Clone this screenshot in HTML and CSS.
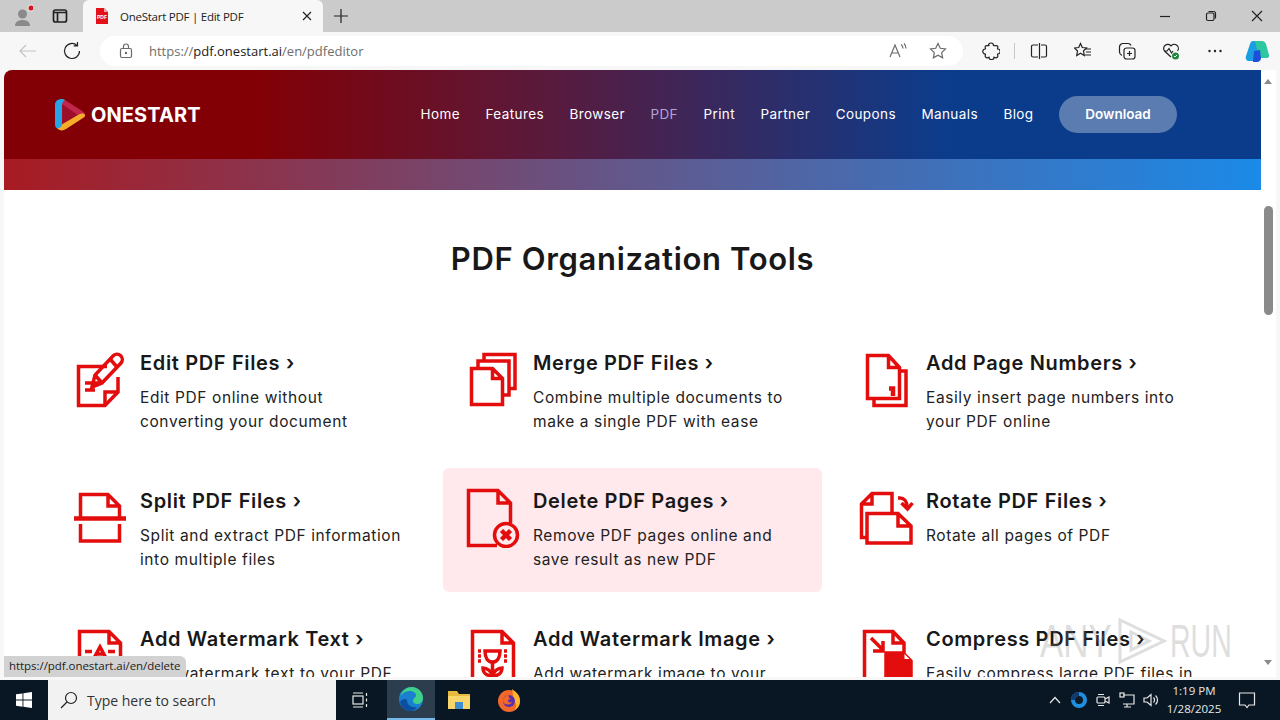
FILE: index.html
```html
<!DOCTYPE html>
<html lang="en">
<head>
    <meta charset="UTF-8">
    <title>OneStart PDF | Edit PDF</title>
    <link rel="stylesheet" href="styles.css">
</head>
<body>
    <div class="tabstrip">
        <div class="strip-btn profile">
            <svg width="24" height="24" viewBox="0 0 24 24"><circle cx="13.500" cy="10" r="4.500" fill="#8a8a8a"/><path d="M6 22c0-4 3-6 7.500-6s7.500 2 7.500 6z" fill="#8a8a8a"/><circle cx="22" cy="4" r="3.500" fill="#e8e8e8"/><circle cx="22" cy="4" r="2.500" fill="#d8111b"/></svg>
        </div>
        <div class="strip-btn">
            <svg width="16" height="16" viewBox="0 0 16 16" class="line-icon dark bold"><rect x="1.500" y="2" width="13" height="12" rx="2"/><path d="M1.500 4.500h13M5.500 4.500V14"/></svg>
        </div>
        <div class="tab">
            <svg width="14" height="16" viewBox="0 0 14 16"><path d="M1 0h8l4 4v12H1z" fill="#e3121a"/><path d="M9 0l4 4H9z" fill="#f7a0a0"/><text x="7" y="10.500" class="favicon-text">PDF</text></svg>
            <span class="tab-title">OneStart PDF | Edit PDF</span>
            <svg width="12" height="12" viewBox="0 0 12 12" class="line-icon dark"><path d="M2 2l8 8M10 2l-8 8"/></svg>
        </div>
        <div class="new-tab">
            <svg width="16" height="16" viewBox="0 0 16 16" class="line-icon dark"><path d="M8 1v14M1 8h14"/></svg>
        </div>
        <div class="window-controls">
            <svg width="12" height="12" viewBox="0 0 12 12" class="line-icon dark"><path d="M1 6.500h10"/></svg>
            <svg width="12" height="12" viewBox="0 0 12 12" class="line-icon dark"><rect x="1.500" y="3" width="7.500" height="7.500" rx="1.500"/><path d="M3.500 1.500h5a2 2 0 0 1 2 2v5"/></svg>
            <svg width="12" height="12" viewBox="0 0 12 12" class="line-icon dark"><path d="M1 1l10 10M11 1L1 11"/></svg>
        </div>
    </div>

    <div class="toolbar">
        <div class="tool-btn">
            <svg width="18" height="18" viewBox="0 0 18 18" class="line-icon faint"><path d="M17 9H1M7 3L1 9l6 6"/></svg>
        </div>
        <div class="tool-btn">
            <svg width="20" height="20" viewBox="0 0 20 20" class="line-icon dark"><path d="M17.500 10A7.500 7.500 0 1 1 15 4.400M15.500 1v3.800H11.700"/></svg>
        </div>
        <div class="address">
            <svg width="14" height="16" viewBox="0 0 14 16" class="line-icon gray"><rect x="1.500" y="5.500" width="11" height="9" rx="1.500"/><path d="M4.500 5.500V3.500a2.500 2.500 0 0 1 5 0v2"/><circle cx="7" cy="10" r=".6"/></svg>
            <span class="url">https://<b>pdf.onestart.ai</b>/en/pdfeditor</span>
            <svg width="18" height="16" viewBox="0 0 18 16" class="line-icon gray read-aloud"><path d="M1 14L6 2l5 12M3 10h6M12 1.500a5 5 0 0 1 2 4M15 0.500a7 7 0 0 1 2 5"/></svg>
            <svg width="18" height="18" viewBox="0 0 18 18" class="line-icon gray star"><path d="M9 1.500l2.300 4.800 5.200.7-3.800 3.600.9 5.200L9 13.300l-4.600 2.500.9-5.200L1.500 7l5.200-.7z"/></svg>
        </div>
        <div class="tool-btn">
            <svg width="18" height="18" viewBox="0 0 18 18" class="line-icon dark"><path d="M6.500 3.500a2.500 2.500 0 0 1 5 0c0 .7 3-.5 4 .5s-.5 3 .2 3a2.500 2.500 0 0 1 0 5c-.7 0 .8 2-.2 3s-3 .5-3.500.2a2.500 2.500 0 0 1-5 0c-.5.300-2.500.8-3.500-.2s.5-3-.2-3a2.500 2.500 0 0 1 0-5c.7 0-.8-2 .2-3s3.500 .2 3.500-.5z"/></svg>
        </div>
        <div class="divider"></div>
        <div class="tool-btn">
            <svg width="18" height="18" viewBox="0 0 18 18" class="line-icon dark"><path d="M8 3H3a1.500 1.500 0 0 0-1.500 1.500v9A1.500 1.500 0 0 0 3 15h5M11 3h4a1.500 1.500 0 0 1 1.500 1.500v9A1.500 1.500 0 0 1 15 15h-4M9.500 1v16"/></svg>
        </div>
        <div class="tool-btn">
            <svg width="18" height="18" viewBox="0 0 18 18" class="line-icon dark"><path d="M6.500 1.500l1.800 4 4.200.5-3 3 .8 4.500-3.800-2.300-3.800 2.300.8-4.500-3-3 4.200-.5zM12 7h5M12 10h5M11 13h6"/></svg>
        </div>
        <div class="tool-btn">
            <svg width="18" height="18" viewBox="0 0 18 18" class="line-icon dark"><rect x="6" y="6" width="11" height="11" rx="2.500"/><path d="M11.500 9v5M9 11.500h5M4 13.500c-2-1-2.500-2-2.500-3.500V5A3.500 3.500 0 0 1 5 1.500h5c1.500 0 2.500.7 3 2"/></svg>
        </div>
        <div class="tool-btn">
            <svg width="18" height="18" viewBox="0 0 18 18"><path d="M9 15L2.500 9A4 4 0 0 1 9 4a4 4 0 0 1 6.500 5M2 9h3l2-2.500L9.500 11 11 9" fill="none" stroke="#222" stroke-width="1.200"/><circle cx="13.500" cy="14" r="3.500" fill="#1f8a3a"/><path d="M12 14l1 1 2-2" fill="none" stroke="#fff"/></svg>
        </div>
        <div class="tool-btn">
            <svg width="16" height="4" viewBox="0 0 16 4" fill="#222"><circle cx="2.500" cy="2" r="1.200"/><circle cx="8" cy="2" r="1.200"/><circle cx="13.500" cy="2" r="1.200"/></svg>
        </div>
        <div class="tool-btn copilot">
            <svg width="24" height="24" viewBox="0 0 24 24"><path d="M8 2h8l-4 16c-.5 2-2 4-4 4H4C2 22 0 20 1 17L5 5c.5-2 1.500-3 3-3z" fill="#1b9de2"/><path d="M10 2h7c2 0 3 1 4 3l3 11c.5 2-1 3-3 3h-7z" fill="#2fc7a0"/><path d="M9 12l6-1 1 9c-1 2-2 3-4 3H8z" fill="#1d4fd8"/></svg>
        </div>
    </div>

    <div class="viewport">
        <div class="page">
            <header class="site-header">
                <a class="logo">
                    <svg width="32" height="34" viewBox="0 0 32 34">
                        <path d="M8 1c1 0 2 .3 3 .9l18 11.500c2.500 1.600 2.500 4.400 0 6L24 22 8 12z" fill="#c2264a"/>
                        <path d="M8 6l16 11-16 10z" fill="#9c0f2a"/>
                        <path d="M31 17c.3 1-.3 2-2 3L12 31c-3 2-7 2-9-1l-.5-4c1.500 1.500 3.500 1.500 6 0L24 17c3-2 6-2 7 0z" fill="#f6ab2a"/>
                        <path d="M8 1C4 1 1 3 1 7v19c0 2 .5 3 1.500 4C5 31 8 29 8 26V8c0-3 1-5 3-6.100C10 1.300 9 1 8 1z" fill="#27a4e6"/>
                    </svg>
                    <span class="logo-text">ONESTART</span>
                </a>
                <nav class="site-nav">
                    <a>Home</a>
                    <a>Features</a>
                    <a>Browser</a>
                    <a class="active">PDF</a>
                    <a>Print</a>
                    <a>Partner</a>
                    <a>Coupons</a>
                    <a>Manuals</a>
                    <a>Blog</a>
                    <a class="download-btn">Download</a>
                </nav>
            </header>
            <div class="header-band"></div>

            <section class="tools">
                <h1>PDF Organization Tools</h1>
                <div class="tools-grid">
                    <a class="tool-card">
                        <svg class="tool-icon" viewBox="0 0 60 60">
                            <path d="M37 16.500H8.500v39H35L48 42V27"/>
                            <path d="M35 55V42h13"/>
                            <path d="M22 37l3-12L43 6a5 5 0 0 1 8 7L32 33z"/>
                            <path d="M25 25l7 8M40 9l7 8M15 33h17M15 40h10"/>
                        </svg>
                        <div class="tool-text">
                            <h3>Edit PDF Files ›</h3>
                            <p>Edit PDF online without converting your document</p>
                        </div>
                    </a>
                    <a class="tool-card">
                        <svg class="tool-icon" viewBox="0 0 60 60">
                            <path d="M8.500 18.500h21l10 10v26h-31zM29.500 18.500v10h10"/>
                            <path d="M15 18v-7h31v34h-6"/>
                            <path d="M21 11V4.500h31v34h-6"/>
                        </svg>
                        <div class="tool-text">
                            <h3>Merge PDF Files ›</h3>
                            <p>Combine multiple documents to make a single PDF with ease</p>
                        </div>
                    </a>
                    <a class="tool-card">
                        <svg class="tool-icon" viewBox="0 0 60 60">
                            <path d="M11.500 5.500h21l11 12v31h-32zM32.500 5.500v12h11"/>
                            <path d="M18 49v6.500h32V21h-6"/>
                            <path d="M33 38.500h4V46" class="thick"/>
                        </svg>
                        <div class="tool-text">
                            <h3>Add Page Numbers ›</h3>
                            <p>Easily insert page numbers into your PDF online</p>
                        </div>
                    </a>
                    <a class="tool-card">
                        <svg class="tool-icon" viewBox="0 0 60 60">
                            <path d="M10.500 29V6.500H38L49.500 18v11M38 6.500V18h11.500"/>
                            <path d="M4 30.500h52" class="thick"/>
                            <path d="M10.500 36v17h39V36"/>
                        </svg>
                        <div class="tool-text">
                            <h3>Split PDF Files ›</h3>
                            <p>Split and extract PDF information into multiple files</p>
                        </div>
                    </a>
                    <a class="tool-card highlighted">
                        <svg class="tool-icon" viewBox="0 0 60 60">
                            <path d="M34 57.500H5.500v-55H35L47.500 15v20M35 2.500V15h12.500"/>
                            <circle cx="43" cy="47" r="11.500" class="pink-fill"/>
                            <path d="M38.500 42.500l9 9M47.500 42.500l-9 9" class="thick"/>
                        </svg>
                        <div class="tool-text">
                            <h3>Delete PDF Pages ›</h3>
                            <p>Remove PDF pages online and save result as new PDF</p>
                        </div>
                    </a>
                    <a class="tool-card">
                        <svg class="tool-icon" viewBox="0 0 60 60">
                            <path d="M10 49.500H5.500V16L16 5.500h20V24M16 5.500V16H5.500"/>
                            <path d="M11 25.500h31l13 12.500v17H11zM42 25.500V38h13"/>
                            <path d="M42 10h2c4 0 7 3 7 9M45.500 15l6 6 5-6"/>
                        </svg>
                        <div class="tool-text">
                            <h3>Rotate PDF Files ›</h3>
                            <p>Rotate all pages of PDF</p>
                        </div>
                    </a>
                    <a class="tool-card">
                        <svg class="tool-icon" viewBox="0 0 60 60">
                            <path d="M9.500 60V5.500H39L50.500 17v43M39 5.500V17h11.500"/>
                            <path d="M15 25.500h7M38 25.500h7M24 32l6-11 6 11M26 28h8M15 33h5M40 33h5"/>
                        </svg>
                        <div class="tool-text">
                            <h3>Add Watermark Text ›</h3>
                            <p>Add watermark text to your PDF</p>
                        </div>
                    </a>
                    <a class="tool-card">
                        <svg class="tool-icon" viewBox="0 0 60 60">
                            <path d="M9.500 60V5.500H39L50.500 17v43M39 5.500V17h11.500"/>
                            <path d="M22 25h15c0 7-3 11-7.500 11S22 32 22 25zM29.500 36v14M20 42c4 0 8 3 9.500 8 1.500-5 5.500-8 9.500-8 0 5-4 8-9.500 8S20 47 20 42zM15 25h3M15 30h3M15 35h3M41 25h3M41 30h3M41 35h3"/>
                        </svg>
                        <div class="tool-text">
                            <h3>Add Watermark Image ›</h3>
                            <p>Add watermark image to your PDF</p>
                        </div>
                    </a>
                    <a class="tool-card">
                        <svg class="tool-icon" viewBox="0 0 60 60">
                            <path d="M8.500 60V5.500H37L48 17v10M37 5.500V17h11"/>
                            <path d="M15 12l12 12M17 25h10V15"/>
                            <path d="M30 27h17l8 8v25H30z" class="solid"/>
                            <path d="M48.500 28l5 5h-5z" class="white-fill"/>
                        </svg>
                        <div class="tool-text">
                            <h3>Compress PDF Files ›</h3>
                            <p>Easily compress large PDF files in seconds</p>
                        </div>
                    </a>
                </div>
            </section>
        </div>

        <div class="scrollbar">
            <span class="arrow up"></span>
            <span class="thumb"></span>
            <span class="arrow down"></span>
        </div>

        <div class="status-tip">https://pdf.onestart.ai/en/delete</div>
        <div class="watermark">
            <span class="wm-any">ANY</span>
            <svg width="52" height="46" viewBox="0 0 52 46"><path d="M4 2l44 21L4 44z M15 14l18 9-18 9z" fill="none" stroke="#8a8a8a" stroke-width="3"/></svg>
            <span class="wm-run">RUN</span>
        </div>
    </div>

    <div class="taskbar">
        <div class="start">
            <svg width="16" height="16" viewBox="0 0 16 16" fill="#fff"><path d="M0 2.300l6.500-.9v6.200H0zM7.400 1.300L16 0v7.600H7.400zM0 8.500h6.500v6.200L0 13.800zM7.400 8.500H16V16l-8.600-1.200z"/></svg>
        </div>
        <div class="search">
            <svg width="18" height="18" viewBox="0 0 18 18" class="line-icon dark"><circle cx="11" cy="7" r="5.500"/><path d="M7 11l-6 6"/></svg>
            <span>Type here to search</span>
        </div>
        <div class="task-btn">
            <svg width="16" height="16" viewBox="0 0 16 16" class="line-icon white"><path d="M1 1h10M1 15h10"/><rect x="1" y="4" width="10" height="8"/><path d="M14.500 1v3M14.500 6.500v3M14.500 12v3"/></svg>
        </div>
        <div class="task-btn active">
            <svg width="24" height="24" viewBox="0 0 24 24"><circle cx="12" cy="12" r="12" fill="#1b7fd0"/><path d="M1 10C3 3 8 0 13 0c6 0 11 5 11 11 0 4-3 6-6 6-2 0-4-1-4-3 0-3 3-3 3-6 0-2-3-4-6-4C7 4 3 6 1 10z" fill="#3fd08a"/><path d="M8 13c0 5 4 8 10 7-2 3-5 4-7 4C6 24 2 20 1 15c2-3 5-4 7-2z" fill="#0c4fa0"/></svg>
        </div>
        <div class="task-btn">
            <svg width="22" height="20" viewBox="0 0 22 20"><path d="M0 1h9l2 3h11v15H0z" fill="#e8b93f"/><path d="M0 6h22v13H0z" fill="#f8d66b"/><rect x="7" y="12" width="8" height="7" fill="#3d8fd0"/></svg>
        </div>
        <div class="task-btn firefox">
            <svg width="24" height="24" viewBox="0 0 24 24"><circle cx="12" cy="13" r="11" fill="#f2682a"/><path d="M15 1c4 3 8 6 8 12 0 4-2 7-5 9 2-4 1-8-2-10 0-4 0-7-1-11z" fill="#ffb52e"/><circle cx="12" cy="13" r="6" fill="#5b2fb0"/><path d="M6 13c0-3 3-6 6-6-1 2 0 3 2 4-2 0-3 1-3 2s2 2 4 1c-1 3-8 4-9-1z" fill="#f2682a"/></svg>
        </div>
        <div class="tray">
            <svg width="12" height="8" viewBox="0 0 12 8" class="line-icon white chevron"><path d="M1 7l5-5.500L11 7"/></svg>
            <svg width="16" height="16" viewBox="0 0 16 16"><circle cx="8" cy="8" r="8" fill="#1f8fe0"/><circle cx="8" cy="8" r="4" fill="#0a1a28"/><path d="M0 8a8 8 0 0 1 8-8v4a4 4 0 0 0-4 4z" fill="#123a70"/></svg>
            <svg width="16" height="16" viewBox="0 0 16 16" class="line-icon white"><rect x="2" y="5" width="8" height="6" rx="1"/><path d="M10 7l4-2v6l-4-2M3 2.500h6M3 13.500h6"/></svg>
            <svg width="16" height="16" viewBox="0 0 16 16" class="line-icon white"><path d="M4 3h11v9H4M8 12v3M5 15h7"/><rect x="1" y="1" width="4" height="4"/></svg>
            <svg width="16" height="16" viewBox="0 0 16 16" class="line-icon white"><path d="M1 6h3l4-3.500v11L4 10H1zM10.500 5.500a3.500 3.500 0 0 1 0 5M12.500 3.500a6 6 0 0 1 0 9"/></svg>
            <div class="clock">
                <span>1:19 PM</span>
                <span>1/28/2025</span>
            </div>
            <svg class="notify line-icon white" width="18" height="18" viewBox="0 0 18 18"><path d="M1.500 2h15v12H11l-2 2.500L7 14H1.500z"/></svg>
        </div>
    </div>
</body>
</html>
```

FILE: styles.css
```css
* {
    margin: 0;
    padding: 0;
    box-sizing: border-box;
}

body {
    width: 1280px;
    height: 720px;
    overflow: hidden;
    display: flex;
    flex-direction: column;
    font-family: "Open Sans", "Liberation Sans", sans-serif;
    background: #f7f7f7;
}

.line-icon {
    fill: none;
    stroke-width: 1.2;
}

.line-icon.bold { stroke-width: 1.7; }
.line-icon.dark { stroke: #222222; }
.line-icon.gray { stroke: #6b6b6b; }
.line-icon.faint { stroke: #c4c4c4; }
.line-icon.white { stroke: #e8e8e8; }

/* browser tabs */
.tabstrip {
    height: 32px;
    display: flex;
    align-items: center;
    background: #cbcbcb;
}

.strip-btn {
    width: 38px;
    height: 32px;
    display: flex;
    align-items: center;
    justify-content: center;
}

.strip-btn.profile {
    width: 41px;
}

.tab {
    width: 240px;
    height: 32px;
    margin-left: 4px;
    padding: 0 10px 0 12px;
    display: flex;
    align-items: center;
    gap: 11px;
    background: #f7f7f7;
    border-radius: 6px 6px 0 0;
}

.favicon-text {
    font-family: "Liberation Sans", sans-serif;
    font-size: 5px;
    font-weight: 700;
    text-anchor: middle;
    fill: #ffffff;
}

.tab-title {
    flex: 1;
    font-size: 11.5px;
    letter-spacing: -0.25px;
    color: #222222;
}

.new-tab {
    width: 36px;
    display: flex;
    justify-content: center;
}

.window-controls {
    margin-left: auto;
    display: flex;
    gap: 34px;
    padding-right: 17px;
}

/* address bar row */
.toolbar {
    height: 36px;
    padding: 2px 0 0 6px;
    display: flex;
    align-items: center;
    background: #f7f7f7;
}

.tool-btn {
    width: 44px;
    height: 30px;
    display: flex;
    align-items: center;
    justify-content: center;
}

.tool-btn.copilot {
    width: 40px;
}

.address {
    width: 863px;
    height: 30px;
    margin: 0 6px;
    padding: 0 16px 0 19px;
    display: flex;
    align-items: center;
    background: #ffffff;
    border-radius: 15px;
}

.url {
    flex: 1;
    margin-left: 16px;
    font-size: 13px;
    color: #6e6e6e;
}

.url b {
    font-weight: 400;
    color: #1a1a1a;
}

.read-aloud {
    margin-right: 22px;
}

.divider {
    width: 1px;
    height: 16px;
    margin: 0 2px 0 1px;
    background: #c8c8c8;
}

/* page area */
.viewport {
    position: relative;
    height: 612px;
    padding: 2px 4px 3px;
    display: flex;
}

.page {
    width: 1257px;
    overflow: hidden;
    background: #ffffff;
    border-radius: 8px 0 0 0;
}

.site-header {
    height: 89px;
    padding: 0 84px 0 50px;
    display: flex;
    align-items: center;
    justify-content: space-between;
    background: linear-gradient(90deg, #820005 20%, #5a1a3c 43%, #0b3c8c 75%);
}

.logo {
    display: flex;
    align-items: center;
    gap: 5px;
}

.logo-text {
    font-family: Inter, sans-serif;
    font-size: 20px;
    font-weight: 700;
    letter-spacing: 0.1px;
    color: #ffffff;
}

.site-nav {
    display: flex;
    align-items: center;
    gap: 25.5px;
}

.site-nav a {
    margin-bottom: 2px;
    font-family: Inter, sans-serif;
    font-size: 13.5px;
    letter-spacing: 0.4px;
    color: #ffffff;
}

.site-nav a.active {
    color: #b3a4d8;
}

.site-nav a.download-btn {
    width: 118px;
    height: 37px;
    margin-bottom: 0;
    line-height: 37px;
    text-align: center;
    font-weight: 600;
    letter-spacing: 0;
    background: #5a7cb0;
    border-radius: 19px;
}

.header-band {
    height: 31px;
    background: linear-gradient(90deg, #a81b22, #5f5a90 52%, #1b8ae8);
}

.tools {
    padding: 49px 46px 0;
}

.tools h1 {
    height: 40px;
    line-height: 40px;
    margin-bottom: 51px;
    text-align: center;
    font-family: Inter, sans-serif;
    font-size: 31px;
    font-weight: 600;
    letter-spacing: 0.65px;
    color: #181818;
}

.tools-grid {
    display: grid;
    grid-template-columns: repeat(3, 379px);
    gap: 14px;
}

.tool-card {
    height: 124px;
    padding: 20px 20px 0;
    display: flex;
    gap: 10px;
    border-radius: 6px;
}

.tool-card.highlighted {
    background: #ffe9ec;
}

.tool-icon {
    flex: none;
    width: 60px;
    height: 60px;
    fill: none;
    stroke: #e30d0d;
    stroke-width: 3.5;
}

.tool-icon .thick {
    stroke-width: 4.5;
}

.tool-icon .solid {
    fill: #e30d0d;
}

.tool-icon .pink-fill {
    fill: #ffe9ec;
}

.tool-icon .white-fill {
    fill: #ffffff;
    stroke: none;
}

.tool-text h3 {
    height: 26px;
    line-height: 26px;
    margin-bottom: 10px;
    font-family: Inter, sans-serif;
    font-size: 20px;
    font-weight: 600;
    letter-spacing: 0.65px;
    color: #181818;
}

.tool-text p {
    line-height: 24px;
    font-family: Inter, sans-serif;
    font-size: 15.5px;
    letter-spacing: 0.6px;
    color: #222222;
}

.scrollbar {
    width: 15px;
    position: relative;
    background: #ffffff;
}

.thumb {
    position: absolute;
    top: 136px;
    left: 3px;
    width: 9px;
    height: 109px;
    background: #8a8a8a;
    border-radius: 5px;
}

.arrow {
    position: absolute;
    left: 3px;
    border-left: 4.5px solid transparent;
    border-right: 4.5px solid transparent;
}

.arrow.up {
    top: 9px;
    border-bottom: 5px solid #8a8a8a;
}

.arrow.down {
    bottom: 12px;
    border-top: 5px solid #8a8a8a;
}

.status-tip {
    position: absolute;
    left: 4px;
    bottom: 3px;
    width: 182px;
    height: 21px;
    padding-left: 5px;
    line-height: 20px;
    font-size: 11.5px;
    letter-spacing: -0.05px;
    color: #222222;
    background: #d2d2d2;
    border-radius: 0 6px 0 0;
}

.watermark {
    position: absolute;
    left: 1040px;
    top: 550px;
    width: 192px;
    display: flex;
    align-items: center;
    font-family: "Liberation Sans", sans-serif;
    font-size: 46px;
    line-height: 46px;
    color: #8a8a8a;
    opacity: 0.28;
}

.wm-any,
.wm-run {
    transform-origin: left center;
}

.wm-any {
    width: 76px;
    transform: scaleX(0.76);
}

.wm-run {
    width: 62px;
    margin-left: 2px;
    transform: scaleX(0.62);
}

/* windows taskbar */
.taskbar {
    height: 40px;
    display: flex;
    align-items: center;
    background: #081723;
}

.start {
    width: 48px;
    display: flex;
    justify-content: center;
}

.search {
    width: 288px;
    height: 40px;
    padding-left: 12px;
    display: flex;
    align-items: center;
    gap: 9px;
    font-size: 14px;
    color: #333333;
    background: #f2f2f2;
}

.task-btn {
    width: 48px;
    height: 40px;
    display: flex;
    align-items: center;
    justify-content: center;
}

.task-btn.active {
    margin-left: 3px;
    background: #2c3e4e;
    border-bottom: 2px solid #76b9ed;
}

.task-btn.firefox {
    margin-left: 2px;
}

.tray {
    margin-left: auto;
    height: 40px;
    display: flex;
    align-items: center;
    gap: 8px;
    padding-right: 24px;
}

.chevron {
    margin-right: 2px;
}

.clock {
    width: 64px;
    margin-left: -5px;
    display: flex;
    flex-direction: column;
    align-items: center;
    line-height: 18px;
    font-size: 11.5px;
    color: #e8e8e8;
}

.notify {
    margin-left: 4px;
}
```
